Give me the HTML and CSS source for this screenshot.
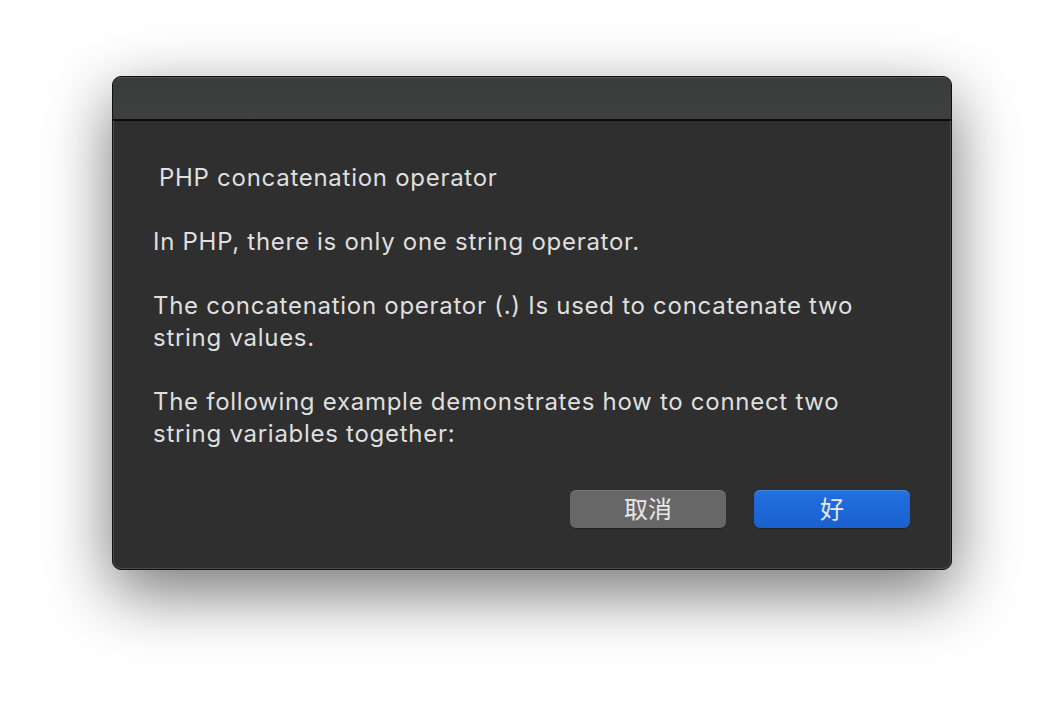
FILE: index.html
```html
<!DOCTYPE html>
<html>
<head>
<meta charset="utf-8">
<link rel="stylesheet" href="styles.css">
</head>
<body>
<div class="stage">
  <div class="dialog">
    <div class="titlebar"></div>
    <div class="content">
      <div class="text">
        <p class="title">PHP concatenation operator</p>
        <p>In PHP, there is only one string operator.</p>
        <p>The concatenation operator (.) Is used to concatenate two string values.</p>
        <p>The following example demonstrates how to connect two string variables together:</p>
      </div>
      <div class="actions">
        <button class="btn btn-cancel">取消</button>
        <button class="btn btn-ok">好</button>
      </div>
    </div>
  </div>
</div>
</body>
</html>
```

FILE: styles.css
```css
html, body {
  margin: 0;
  padding: 0;
  background: #ffffff;
}

.stage {
  padding: 76px 0 0 112px;
  height: 718px;
  box-sizing: border-box;
}

.dialog {
  width: 840px;
  height: 494px;
  box-sizing: border-box;
  border: 1px solid #111111;
  border-radius: 9px;
  background: #2f2f2f;
  box-shadow: inset 0 0 0 1px rgba(255,255,255,0.14), 0 22px 66px rgba(0,0,0,0.55);
  display: flex;
  flex-direction: column;
  overflow: hidden;
  font-family: "Inter", "Noto Sans CJK SC", sans-serif;
  color: #dfdfdf;
}

.titlebar {
  height: 42px;
  flex: none;
  background: linear-gradient(#3a3b3b, #3f4141);
  border-bottom: 2px solid #0c0c0c;
  box-shadow: inset 0 1px 0 rgba(255,255,255,0.12);
}

.content {
  flex: 1;
  display: flex;
  flex-direction: column;
  padding: 41px 41px 0 40px;
}

.text {
  width: 720px;
  font-size: 24px;
  line-height: 32px;
  letter-spacing: 0.72px;
}

.text p {
  margin: 0 0 32px 0;
}

.text p:last-child {
  margin-bottom: 0;
}

.text .title {
  padding-left: 6px;
}

.actions {
  display: flex;
  justify-content: flex-end;
  gap: 28px;
  margin-top: 40px;
}

.btn {
  width: 156px;
  height: 38px;
  border-radius: 6px;
  border: none;
  font-family: "Noto Sans CJK SC", sans-serif;
  font-size: 24px;
  line-height: 36px;
  padding: 0 0 2px 0;
  color: #e8e8e8;
}

.btn-cancel {
  background: #676767;
  box-shadow: inset 0 1px 0 rgba(255,255,255,0.1), 0 1px 1px rgba(0,0,0,0.3);
}

.btn-ok {
  background: linear-gradient(#2370e2, #1a60cf);
  box-shadow: inset 0 1px 0 rgba(255,255,255,0.15), 0 1px 1px rgba(0,0,0,0.3);
}
```
